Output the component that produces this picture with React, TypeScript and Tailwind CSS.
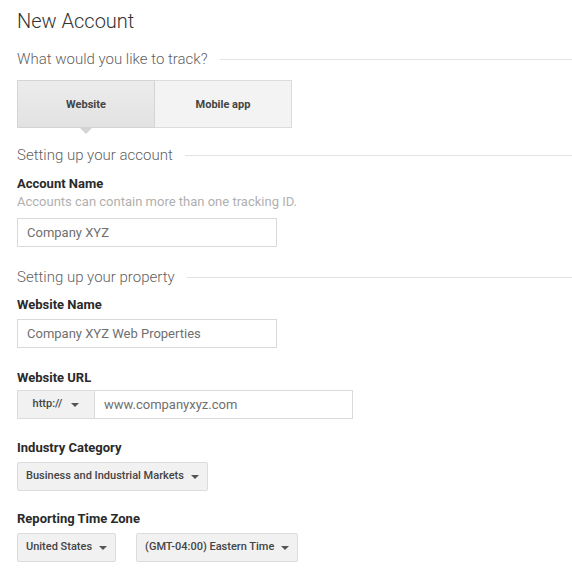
import type { ReactNode } from "react";

const FONT = "font-['Roboto','Liberation_Sans',sans-serif]";

function Caret({ className = "ml-[8px]" }: { className?: string }) {
  return (
    <span
      className={`inline-block h-0 w-0 border-x-[4px] border-t-[4px] border-x-transparent border-t-[#555] ${className}`}
    />
  );
}

function SectionTitle({ children }: { children: ReactNode }) {
  return (
    <div className="flex items-center">
      <h2 className="text-[15px] leading-[20px] font-light text-[#5f5f5f]">{children}</h2>
      <div className="ml-3 h-px flex-1 bg-[#e2e2e2]" />
    </div>
  );
}

function Label({ children, className = "" }: { children: ReactNode; className?: string }) {
  return <p className={`text-[13px] leading-[18px] font-bold text-[#2a2a2a] ${className}`}>{children}</p>;
}

function TextInput({ value, className = "" }: { value: string; className?: string }) {
  return (
    <div
      className={`flex h-[29px] items-center border border-[#d9d9d9] bg-white px-[9px] text-[13px] whitespace-nowrap text-[#6f6f6f] ${className}`}
    >
      {value}
    </div>
  );
}

function Dropdown({ label }: { label: string }) {
  return (
    <div className="flex h-[29px] flex-none items-center rounded-[2px] border border-[#dcdcdc] bg-[#f1f1f1] pr-[8px] pl-[8px] text-[11px] font-medium whitespace-nowrap text-[#444]">
      {label}
      <Caret className="ml-[7px]" />
    </div>
  );
}

export default function App() {
  return (
    <div className={`h-[574px] w-[572px] overflow-hidden bg-white pl-[17px] ${FONT}`}>
      <h1 className="mt-[9px] text-[20px] leading-[24px] font-light text-[#333]">New Account</h1>

      <div className="mt-[16px]">
        <SectionTitle>What would you like to track?</SectionTitle>
      </div>

      <div className="mt-[11px] flex">
        <div className="relative flex h-[48px] w-[138px] items-center justify-center border border-[#d4d4d4] bg-gradient-to-b from-[#ececec] to-[#e2e2e2] pt-[2px] text-[11px] font-bold text-[#444]">
          Website
          <span className="absolute top-full left-1/2 h-0 w-0 -translate-x-1/2 border-x-[7px] border-t-[7px] border-x-transparent border-t-[#d4d4d4]" />
        </div>
        <div className="flex h-[48px] w-[137px] items-center justify-center border border-l-0 border-[#dcdcdc] bg-[#f3f3f3] pt-[2px] text-[11px] font-bold text-[#444]">
          Mobile app
        </div>
      </div>

      <div className="mt-[17px]">
        <SectionTitle>Setting up your account</SectionTitle>
      </div>
      <Label className="mt-[10px]">Account Name</Label>
      <p className="text-[13px] leading-[18px] text-[#b0b0b0]">Accounts can contain more than one tracking ID.</p>
      <TextInput value="Company XYZ" className="mt-[7px] w-[260px]" />

      <div className="mt-[20px]">
        <SectionTitle>Setting up your property</SectionTitle>
      </div>
      <Label className="mt-[9px]">Website Name</Label>
      <TextInput value="Company XYZ Web Properties" className="mt-[5px] w-[260px]" />

      <Label className="mt-[21px]">Website URL</Label>
      <div className="mt-[3px] flex">
        <div className="flex h-[29px] w-[78px] items-center justify-center border border-[#dcdcdc] bg-[#f1f1f1] text-[11px] font-medium text-[#444]">
          http://
          <Caret className="ml-[9px]" />
        </div>
        <TextInput value="www.companyxyz.com" className="w-[258px] border-l-0" />
      </div>

      <Label className="mt-[20px]">Industry Category</Label>
      <div className="mt-[5px] flex">
        <Dropdown label="Business and Industrial Markets" />
      </div>

      <Label className="mt-[19px]">Reporting Time Zone</Label>
      <div className="mt-[5px] flex gap-[20px]">
        <Dropdown label="United States" />
        <Dropdown label="(GMT-04:00) Eastern Time" />
      </div>
    </div>
  );
}
